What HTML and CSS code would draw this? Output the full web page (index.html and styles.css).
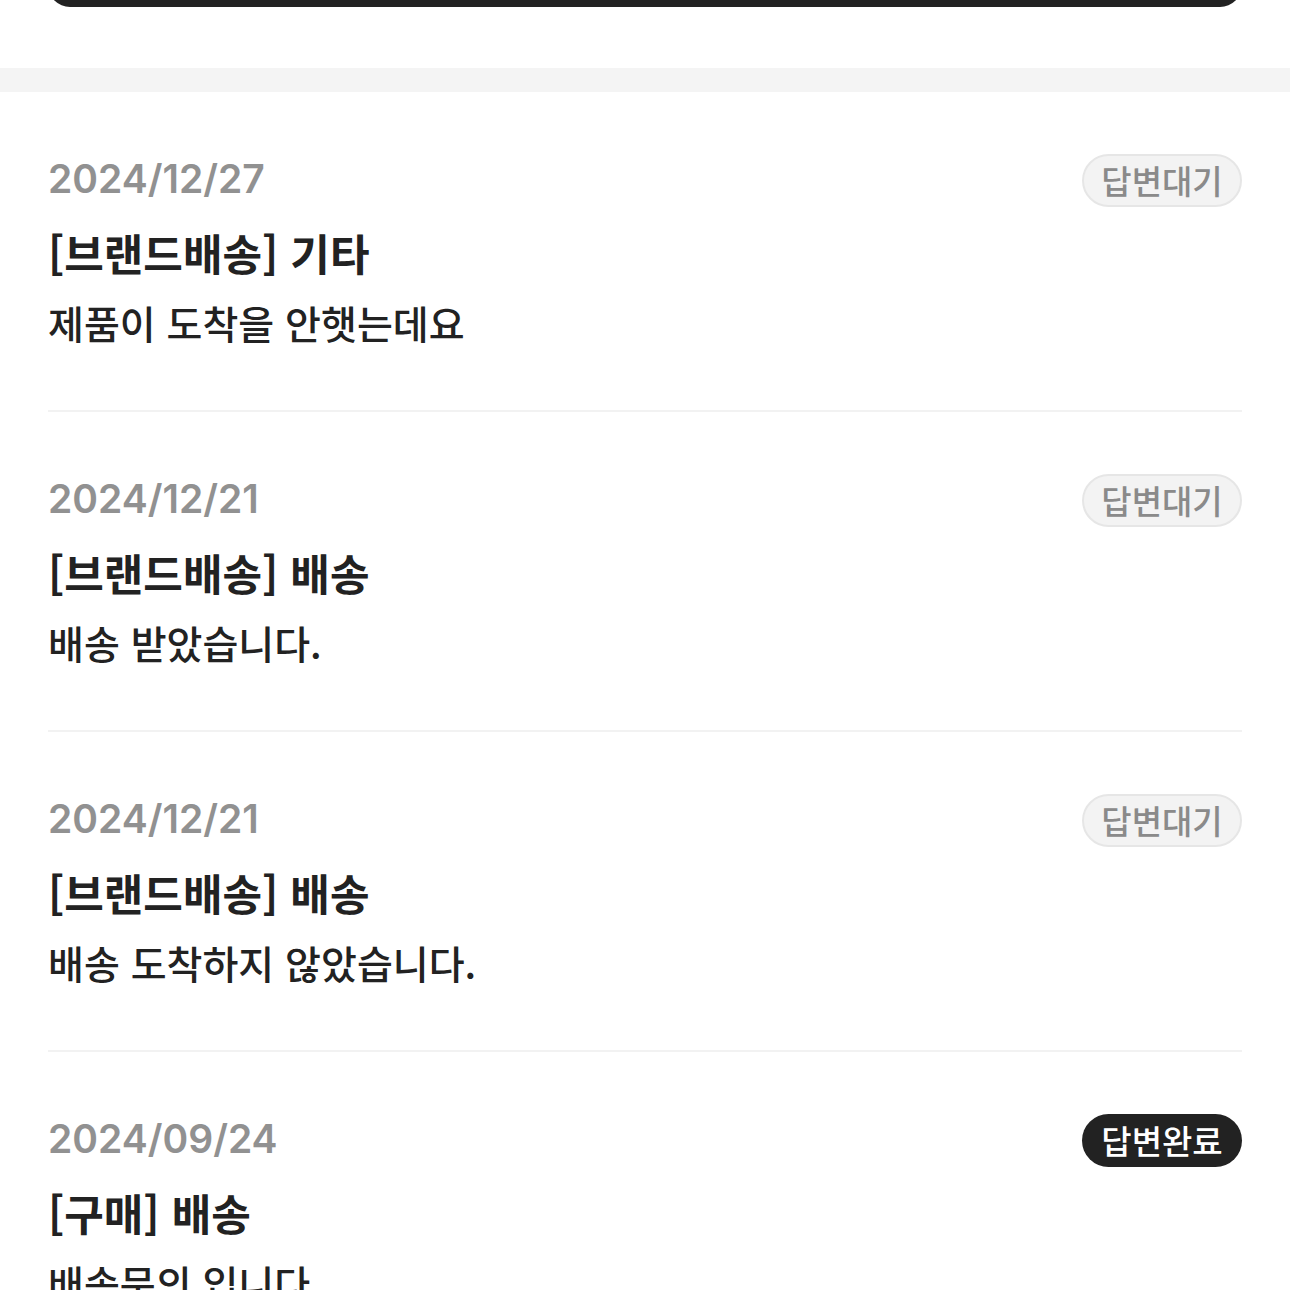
FILE: index.html
```html
<!DOCTYPE html>
<html lang="ko">
<head>
<meta charset="utf-8">
<title>문의 내역</title>
<link rel="stylesheet" href="styles.css">
</head>
<body>
<div class="top-area">
  <div class="cta-clip"><div class="cta"></div></div>
</div>
<div class="band"></div>
<ul class="list">
  <li class="item">
    <div class="head"><span class="date">2024/12/27</span><span class="badge wait">답변대기</span></div>
    <div class="title">[브랜드배송] 기타</div>
    <div class="text">제품이 도착을 안햇는데요</div>
  </li>
  <li class="item">
    <div class="head"><span class="date">2024/12/21</span><span class="badge wait">답변대기</span></div>
    <div class="title">[브랜드배송] 배송</div>
    <div class="text">배송 받았습니다.</div>
  </li>
  <li class="item">
    <div class="head"><span class="date">2024/12/21</span><span class="badge wait">답변대기</span></div>
    <div class="title">[브랜드배송] 배송</div>
    <div class="text">배송 도착하지 않았습니다.</div>
  </li>
  <li class="item">
    <div class="head"><span class="date">2024/09/24</span><span class="badge done">답변완료</span></div>
    <div class="title">[구매] 배송</div>
    <div class="text">배송문의 입니다</div>
  </li>
</ul>
</body>
</html>
```
FILE: styles.css
```css
html, body {
  margin: 0;
  padding: 0;
  background: #ffffff;
}
body {
  font-family: "Noto Sans CJK KR", "Noto Sans", sans-serif;
  color: #222222;
  height: 1290px;
  overflow: hidden;
}
.top-area {
  height: 68px;
  padding: 0 48px;
}
.cta-clip {
  height: 7px;
  overflow: hidden;
  display: flex;
  flex-direction: column;
  justify-content: flex-end;
}
.cta {
  flex: none;
  height: 80px;
  background: #222222;
  border-radius: 22px;
}
.band {
  height: 24px;
  background: #f4f4f4;
}
.list {
  list-style: none;
  margin: 0;
  padding: 0 48px;
}
.item {
  padding: 61px 0 62px;
  border-bottom: 2px solid #f2f2f2;
}
.head {
  display: flex;
  align-items: center;
  justify-content: space-between;
  height: 52px;
}
.date {
  font-family: "Inter", "Liberation Sans", sans-serif;
  font-weight: 600;
  font-size: 39px;
  line-height: 48px;
  color: #919191;
}
.badge {
  box-sizing: border-box;
  height: 53px;
  width: 160px;
  border-radius: 27px;
  display: flex;
  align-items: center;
  justify-content: center;
  font-size: 33px;
  font-weight: 500;
  line-height: 1;
  margin-top: 3px;
}
.badge.wait {
  background: #f3f3f3;
  border: 2px solid #e6e6e6;
  color: #8a8a8a;
}
.badge.done {
  background: #222222;
  color: #ffffff;
}
.title {
  margin-top: 19px;
  font-size: 43px;
  font-weight: 700;
  line-height: 56px;
  color: #222222;
}
.text {
  margin-top: 16px;
  font-size: 39px;
  font-weight: 500;
  line-height: 52px;
  color: #222222;
}
```
